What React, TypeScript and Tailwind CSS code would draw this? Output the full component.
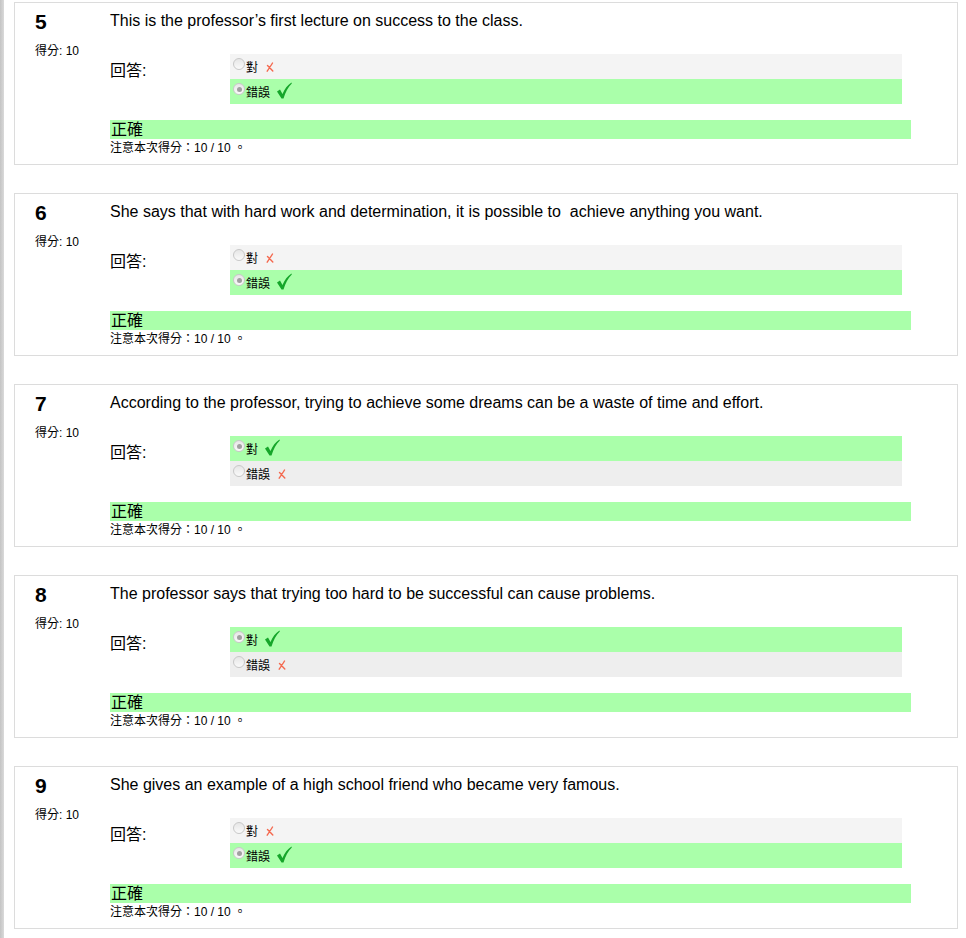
import React from "react";

const questions = [
  { no: 5, text: "This is the professor\u2019s first lecture on success to the class.", answer: "錯誤" },
  { no: 6, text: "She says that with hard work and determination, it is possible to\u00a0 achieve anything you want.", answer: "錯誤" },
  { no: 7, text: "According to the professor, trying to achieve some dreams can be a waste of time and effort.", answer: "對" },
  { no: 8, text: "The professor says that trying too hard to be successful can cause problems.", answer: "對" },
  { no: 9, text: "She gives an example of a high school friend who became very famous.", answer: "錯誤" },
];

const options = ["對", "錯誤"];

function Tick() {
  return (
    <svg width="16" height="17" viewBox="0 0 16 17" className="ml-1.5 mt-[1px]">
      <path d="M1 9.5 L4 7.5 L6.5 12 C8.5 7 11.5 3 15.5 0.5 L15.8 1.5 C12 5 9.5 10 7.5 16.5 L5.5 16.5 Z" fill="#16a62a" />
    </svg>
  );
}

function Cross() {
  return (
    <svg width="8" height="10" viewBox="0 0 8 10" className="ml-2 mt-[6px]">
      <path d="M6.5 1 C5 3.5 3 6.5 1.2 9.2 M1.5 3.5 C3 5 5 7 6.8 9" stroke="#f4694f" strokeWidth="1.4" fill="none" strokeLinecap="round" />
    </svg>
  );
}

function Radio({ checked }: { checked: boolean }) {
  return (
    <span className="mt-[2px] flex h-[12px] w-[12px] shrink-0 items-center justify-center rounded-full border border-[#c8c8c8] bg-gradient-to-b from-[#e6e6e6] to-[#fafafa]">
      {checked && <span className="h-[5px] w-[5px] rounded-full bg-[#a0a0a0]" />}
    </span>
  );
}

function Question({ q }: { q: (typeof questions)[number] }) {
  return (
    <div className="flex h-[163px] w-[944px] border border-[#dcdcdc] bg-white">
      {/* info */}
      <div className="w-[95px] shrink-0 pl-5 pt-[7px]">
        <div className="text-[21px] font-bold leading-6 text-black">{q.no}</div>
        <div className="mt-[9px] text-[12px] leading-4 text-black">得分: 10</div>
      </div>
      {/* content */}
      <div className="flex-1 pt-[8px]">
        <div className="text-[16px] leading-5 text-black">{q.text}</div>
        <div className="mt-[23px] flex">
          <div className="w-[120px] pt-[7px] text-[16px] leading-5">回答:</div>
          <div className="w-[672px]">
            {options.map((o, i) => {
              const picked = o === q.answer;
              return (
                <div
                  key={o}
                  className={`flex h-[25px] items-start pl-[3px] pt-[2px] text-[12px] leading-5 ${
                    picked ? "bg-[#aaffaa]" : i === 0 ? "bg-[#f4f4f4]" : "bg-[#eeeeee]"
                  }`}
                >
                  <Radio checked={picked} />
                  <span className="ml-[1px] pt-[2px]">{o}</span>
                  {picked ? <Tick /> : <Cross />}
                </div>
              );
            })}
          </div>
        </div>
        <div className="mt-[16px] h-[19px] w-[801px] bg-[#aaffaa] pl-[1px] text-[16px] leading-[20px]">正確</div>
        <div className="pt-[1px] text-[12px] leading-4">注意本次得分：10 / 10 。</div>
      </div>
    </div>
  );
}

export default function App() {
  return (
    <div
      className="flex min-h-[938px] bg-white text-black"
      style={{ fontFamily: '"Liberation Sans", "Noto Sans CJK TC", sans-serif' }}
    >
      <div className="w-[4px] shrink-0 bg-gradient-to-r from-[#c4c4c4] to-[#dadada]" />
      <div className="flex flex-col gap-[28px] pl-[10px] pt-[2px]">
        {questions.map((q) => (
          <Question key={q.no} q={q} />
        ))}
      </div>
    </div>
  );
}
